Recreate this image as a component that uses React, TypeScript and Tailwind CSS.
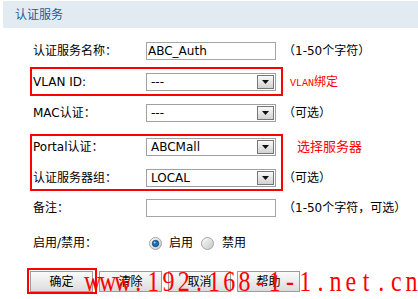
import React from "react";

const FONT = "font-['DejaVu_Sans','Noto_Sans_CJK_SC',sans-serif]";
const MARK = "www.192.168-1-1.net.cn";

function TextBox({ value = "" }: { value?: string }) {
  return (
    <div className="w-[130px] h-[18px] border border-[#a5a5a5] bg-white flex items-center pl-[1px] text-[12px] text-black leading-none">
      {value}
    </div>
  );
}

function Select({ value }: { value: string }) {
  return (
    <div className="w-[130px] h-[18px] border border-[#a0a0a0] bg-white flex items-center justify-between">
      <span className="pl-[4px] text-[12px] text-black leading-none">{value}</span>
      <span className="mr-[1px] w-[17px] h-[14px] border border-[#767676] bg-gradient-to-b from-[#fafafa] to-[#d2d2d2] flex items-center justify-center">
        <svg width="7" height="4" viewBox="0 0 7 4">
          <path d="M0 0H7L3.5 4Z" fill="#111" />
        </svg>
      </span>
    </div>
  );
}

function Radio({ checked }: { checked?: boolean }) {
  const id = checked ? "rg1" : "rg2";
  return (
    <svg width="13" height="13" viewBox="0 0 13 13">
      <defs>
        <linearGradient id={id} x1="0" y1="0" x2="1" y2="1">
          <stop offset="0" stopColor="#ffffff" />
          <stop offset="1" stopColor="#c4c4c4" />
        </linearGradient>
      </defs>
      <circle cx="6.5" cy="6.5" r="6" fill={`url(#${id})`} stroke="#a3a3a3" />
      {checked && <circle cx="6.5" cy="6.5" r="3.2" fill="#1f6fb4" stroke="#0f3f6e" strokeWidth="0.8" />}
      {checked && <circle cx="5.6" cy="5.6" r="1" fill="#9fd0f5" />}
    </svg>
  );
}

function Label({ children }: { children: React.ReactNode }) {
  return <span className="w-[114px] shrink-0 pl-[1px]">{children}</span>;
}

function Btn({ children, className = "" }: { children: React.ReactNode; className?: string }) {
  return (
    <div
      className={`w-[63px] h-[21px] border border-[#9c9c9c] bg-gradient-to-b from-[#fbfbfb] to-[#dcdcdc] flex items-center justify-center text-[12px] text-black ${className}`}
    >
      {children}
    </div>
  );
}

export default function App() {
  return (
    <div className={`relative w-[418px] h-[299px] overflow-hidden bg-white text-[12px] text-black ${FONT}`}>
      <div className="mt-[1px] ml-[3px] h-[27px] bg-[#e3ebf2] flex items-center pl-[12px] text-[#1b5c9c]">
        认证服务
      </div>

      <div className="pl-[30px] flex flex-col">
        {/* 名称 */}
        <div className="mt-[12px] h-[22px] flex items-center">
          <div className="w-[253px] flex items-center pl-[2px]">
            <Label>认证服务名称：</Label>
            <TextBox value="ABC_Auth" />
          </div>
          <span>（1-50个字符）</span>
        </div>

        {/* VLAN */}
        <div className="mt-[5px] flex items-center">
          <div className="w-[253px] h-[29px] border-2 border-[#ff0000] flex items-center">
            <Label>VLAN ID:</Label>
            <Select value="---" />
          </div>
          <span className="ml-[7px] text-[#ff0000] leading-none">
            <span className="font-['Liberation_Mono',monospace] text-[10px]">VLAN</span>
            <span className="font-['Noto_Sans_CJK_SC',sans-serif] text-[12px]">绑定</span>
          </span>
        </div>

        {/* MAC */}
        <div className="mt-[6px] h-[22px] flex items-center">
          <div className="w-[253px] flex items-center pl-[2px]">
            <Label>MAC认证：</Label>
            <Select value="---" />
          </div>
          <span>（可选）</span>
        </div>

        {/* Portal + 服务器组 */}
        <div className="mt-[10px] flex">
          <div className="w-[253px] h-[57px] border-2 border-[#ff0000] flex flex-col gap-[9px]">
            <div className="h-[22px] flex items-center">
              <Label>Portal认证：</Label>
              <Select value="ABCMall" />
            </div>
            <div className="h-[22px] flex items-center">
              <Label>认证服务器组：</Label>
              <Select value="LOCAL" />
            </div>
          </div>
          <div className="flex flex-col gap-[9px] pt-[2px]">
            <div className="h-[22px] flex items-center pl-[14px] text-[#ff0000] text-[13px]">选择服务器</div>
            <div className="h-[22px] flex items-center">（可选）</div>
          </div>
        </div>

        {/* 备注 */}
        <div className="mt-[6px] h-[22px] flex items-center">
          <div className="w-[253px] flex items-center pl-[2px]">
            <Label>备注：</Label>
            <TextBox />
          </div>
          <span>（1-50个字符，可选）</span>
        </div>

        {/* 启用 */}
        <div className="mt-[13px] h-[22px] flex items-center">
          <div className="flex items-center pl-[2px]">
            <Label>启用/禁用：</Label>
            <span className="ml-[3px] flex items-center">
              <Radio checked />
            </span>
            <span className="ml-[7px]">启用</span>
            <span className="ml-[8px] flex items-center">
              <Radio />
            </span>
            <span className="ml-[8px]">禁用</span>
          </div>
        </div>

        {/* buttons */}
        <div className="mt-[14px] flex items-start">
          <div className="-ml-[3px] w-[70px] h-[26px] border-2 border-[#ff0000] pt-[1px] pl-[1px]">
            <Btn>确定</Btn>
          </div>
          <Btn className="ml-[2px] mt-[3px]">清除</Btn>
          <Btn className="ml-[6px] mt-[3px]">取消</Btn>
          <Btn className="ml-[6px] mt-[3px]">帮助</Btn>
        </div>
      </div>

      {/* watermark over the buttons */}
      <div className="absolute left-[85px] top-[272px] flex font-['Liberation_Serif',serif] text-[24px] leading-none text-[#ff0000] whitespace-nowrap origin-bottom scale-y-125 pointer-events-none">
        {MARK.split("").map((c, i) => (
          <span key={i} className="w-[15.2px] flex justify-center">
            {c}
          </span>
        ))}
      </div>
    </div>
  );
}
